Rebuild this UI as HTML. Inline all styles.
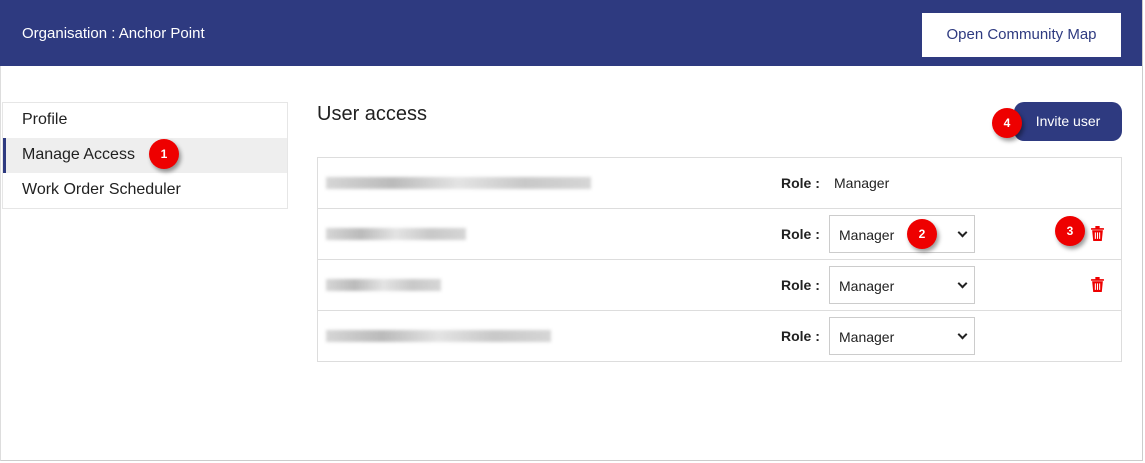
<!DOCTYPE html><html><head><style>
body{margin:0;width:1145px;height:463px;background:#fff;font-family:"Liberation Sans",sans-serif;position:relative;overflow:hidden;color:#212121}
.frame{position:absolute;left:0;top:0;width:1141px;height:460px;border-right:1px solid #ccc;border-bottom:1px solid #ccc;border-left:1px solid #ddd}
.hdr{position:absolute;left:0;top:0;width:1142px;height:66px;background:#2e3a80}
.hdr .t{position:absolute;left:22px;top:25px;color:#fff;font-size:15px}
.btn{position:absolute;left:922px;top:13px;width:199px;height:44px;background:#fff;color:#2e3a80;font-size:15px;text-align:center;line-height:44px}
.side{position:absolute;left:2px;top:102px;width:284px;height:105px;border:1px solid #e6e6e6}
.side div{height:35px;line-height:34px;padding-left:19px;font-size:16px}
.side .a{background:#eee;border-left:3px solid #2e3a80;padding-left:16px}
.h{position:absolute;left:317px;top:103px;font-size:20px}
.inv{position:absolute;left:1014px;top:102px;width:108px;height:39px;background:#2e3a80;border-radius:10px;color:#fff;font-size:14px;line-height:39px;text-align:center}
.tbl{position:absolute;left:317px;top:157px;width:803px;height:203px;border:1px solid #ddd}
.row{position:absolute;left:0;width:803px;height:50px;border-bottom:1px solid #ddd}
.blur{position:absolute;left:8px;top:19px;height:12px;background:linear-gradient(90deg,#ccc,#aaa,#ddd,#bbb,#ccc);filter:blur(1.5px);opacity:.8}
.role{position:absolute;left:463px;top:17px;font-size:14px;font-weight:bold}
.mg{position:absolute;left:516px;top:17px;font-size:14px}
.sel{position:absolute;left:511px;top:6px;width:146px;height:38px;border:1px solid #ccc;font-size:14px;line-height:38px;padding-left:9px;box-sizing:border-box}
.sel:after{content:"";position:absolute;right:8px;top:13px;width:5px;height:5px;border-right:2px solid #222;border-bottom:2px solid #222;transform:rotate(45deg)}
.bad{position:absolute;width:30px;height:30px;border-radius:50%;background:#e00;color:#fff;font-weight:bold;font-size:12px;text-align:center;line-height:30px;box-shadow:2px 3px 4px rgba(0,0,0,.4)}
.trash{position:absolute;left:773px;top:17px}
</style></head><body>
<div class="frame"></div>
<div class="hdr"><div class="t">Organisation : Anchor Point</div><div class="btn">Open Community Map</div></div>
<div class="side"><div>Profile</div><div class="a">Manage Access</div><div>Work Order Scheduler</div></div>
<div class="bad" style="left:149px;top:139px">1</div>
<div class="h">User access</div>
<div class="inv">Invite user</div>
<div class="bad" style="left:992px;top:108px">4</div>
<div class="tbl">
<div class="row" style="top:0"><div class="blur" style="width:265px"></div><span class="role">Role :</span><span class="mg">Manager</span></div>
<div class="row" style="top:51px"><div class="blur" style="width:140px"></div><span class="role">Role :</span><div class="sel">Manager</div>
<svg class="trash" width="13" height="15" viewBox="0 0 12 14"><path d="M0 2h12v1.5H0zM4 0h4v2H4zM1 4h10l-1 10H2z" fill="#e00"/><path d="M4 6v6M6 6v6M8 6v6" stroke="#fff" stroke-width="1"/></svg></div>
<div class="row" style="top:102px"><div class="blur" style="width:115px"></div><span class="role">Role :</span><div class="sel">Manager</div>
<svg class="trash" width="13" height="15" viewBox="0 0 12 14"><path d="M0 2h12v1.5H0zM4 0h4v2H4zM1 4h10l-1 10H2z" fill="#e00"/><path d="M4 6v6M6 6v6M8 6v6" stroke="#fff" stroke-width="1"/></svg></div>
<div class="row" style="top:153px;border-bottom:none"><div class="blur" style="width:225px"></div><span class="role">Role :</span><div class="sel">Manager</div></div>
</div>
<div class="bad" style="left:907px;top:219px">2</div>
<div class="bad" style="left:1055px;top:216px">3</div>
</body></html>
